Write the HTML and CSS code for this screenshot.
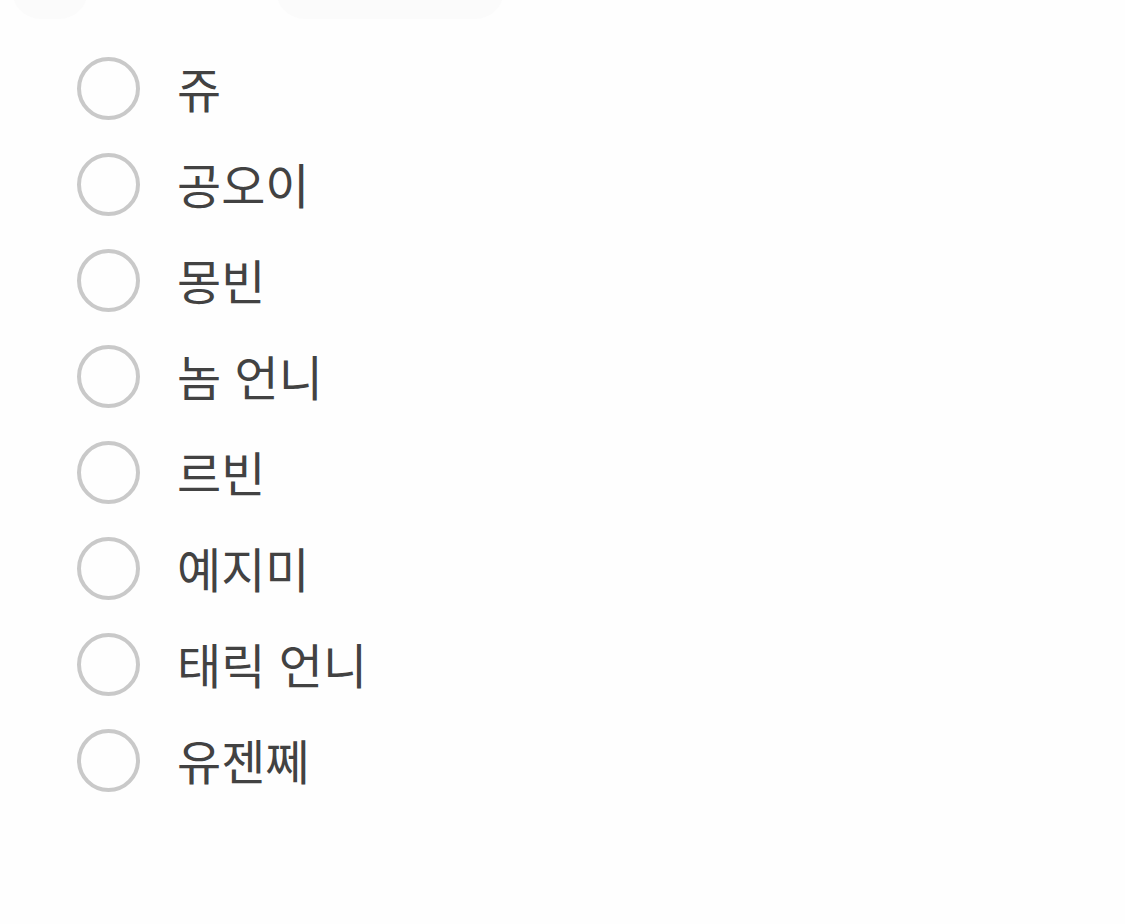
FILE: index.html
```html
<!DOCTYPE html>
<html lang="ko">
<head>
<meta charset="utf-8">
<link rel="stylesheet" href="styles.css">
</head>
<body>
<div class="shade">
  <div class="blob blob-left"></div>
  <div class="blob blob-right"></div>
</div>
<ul class="options">
  <li class="option"><span class="radio"></span><span class="label">쥬</span></li>
  <li class="option"><span class="radio"></span><span class="label">공오이</span></li>
  <li class="option"><span class="radio"></span><span class="label">몽빈</span></li>
  <li class="option"><span class="radio"></span><span class="label">놈 언니</span></li>
  <li class="option"><span class="radio"></span><span class="label">르빈</span></li>
  <li class="option"><span class="radio"></span><span class="label">예지미</span></li>
  <li class="option"><span class="radio"></span><span class="label">태릭 언니</span></li>
  <li class="option"><span class="radio"></span><span class="label">유젠쩨</span></li>
</ul>
</body>
</html>
```
FILE: styles.css
```css
html, body {
  margin: 0;
  padding: 0;
  background: #fefefe;
}
body {
  width: 1125px;
  height: 924px;
  overflow: hidden;
  position: relative;
  font-family: "Noto Sans CJK KR", "Noto Sans", sans-serif;
}
.shade {
  position: absolute;
  top: 0;
  left: 0;
  right: 0;
  height: 20px;
}
.blob {
  position: absolute;
  top: -10px;
  height: 29px;
  background: #fbfbfb;
  border-radius: 0 0 60px 60px;
}
.blob-left { left: 12px; width: 76px; }
.blob-right { left: 276px; width: 228px; border-radius: 0 0 80px 80px; }
.options {
  list-style: none;
  margin: 0;
  padding: 40px 0 0 77px;
}
.option {
  display: flex;
  align-items: center;
  height: 96px;
}
.radio {
  box-sizing: border-box;
  width: 63px;
  height: 63px;
  border: 4px solid #c9c9c9;
  border-radius: 50%;
  flex: none;
}
.label {
  margin-left: 37px;
  font-size: 48px;
  color: #424242;
  line-height: 1;
  position: relative;
  top: -1px;
}
```
